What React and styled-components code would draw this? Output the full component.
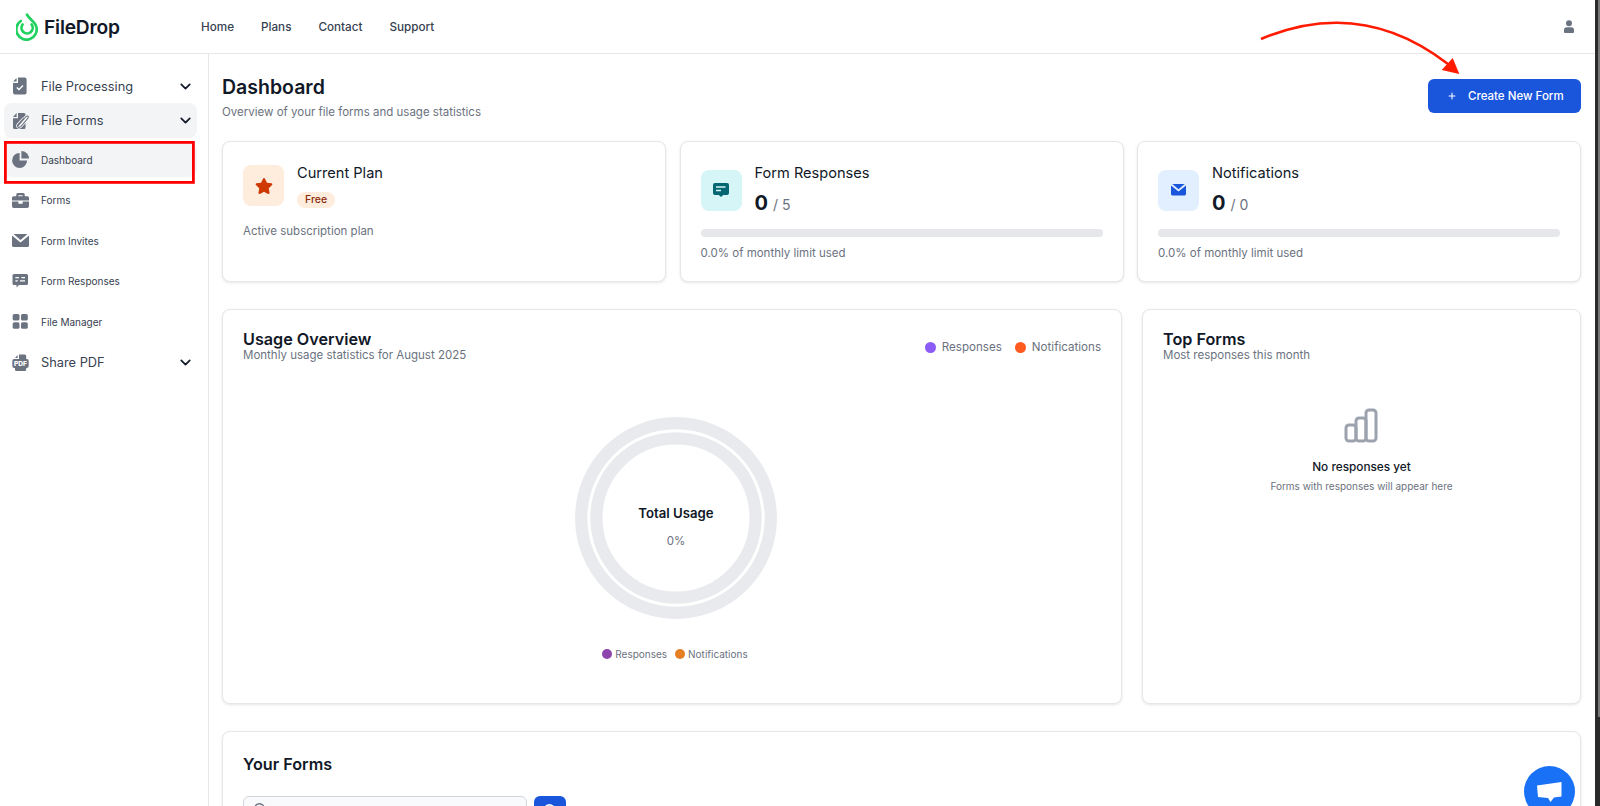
import React from 'react'
import styled, { createGlobalStyle } from 'styled-components'
import { ChevronDown, Plus, Search } from 'lucide-react'
import { FaStar, FaBriefcase } from 'react-icons/fa'

const GlobalStyle = createGlobalStyle`
  html, body { margin: 0; padding: 0; height: 100%; overflow: hidden; background: #fff; }
  body { font-family: Inter, "Liberation Sans", sans-serif; color: #111827; }
  * { box-sizing: border-box; }
`

const Page = styled.div`
  width: 1600px;
  height: 806px;
  display: flex;
  overflow: hidden;
  position: relative;
`

const Screen = styled.div`
  width: 1595px;
  height: 806px;
  display: flex;
  flex-direction: column;
  overflow: hidden;
`

const ScrollEdge = styled.div`
  width: 5px;
  background: #2a2a2a;
  display: flex;
  justify-content: flex-end;
`

const ScrollThumb = styled.div`
  width: 2px;
  height: 717px;
  background: #777;
`

const Header = styled.header`
  height: 54px;
  flex: none;
  display: flex;
  align-items: center;
  border-bottom: 1px solid #e5e7eb;
  padding: 0 21px 0 16px;
`

const Logo = styled.div`
  display: flex;
  align-items: center;
  gap: 4px;
  width: 185px;
  font-size: 19.2px;
  font-weight: 600;
  color: #111827;
  letter-spacing: -0.2px;
`

const Nav = styled.nav`
  display: flex;
  gap: 27px;
  flex: 1;
`

const NavLink = styled.a`
  font-size: 11.7px;
  font-weight: 500;
  color: #374151;
`

const Body = styled.div`
  flex: 1;
  display: flex;
  min-height: 0;
`

const Sidebar = styled.aside`
  width: 209px;
  flex: none;
  border-right: 1px solid #e5e7eb;
  padding: 15px 11px 0 4px;
  display: flex;
  flex-direction: column;
`

const GroupRow = styled.div`
  height: ${p => p.$height || 35}px;
  margin-bottom: ${p => p.$gap || 0}px;
  display: flex;
  align-items: center;
  padding: 0 3px 0 8px;
  border-radius: 8px;
  background: ${p => (p.$active ? '#f3f4f6' : 'transparent')};
  font-size: 12.8px;
  color: #374151;
`

const SubRow = styled.div`
  height: 35px;
  margin-bottom: 5.5px;
  display: flex;
  align-items: center;
  padding: 0 0 0 8px;
  border-radius: 8px;
  background: ${p => (p.$active ? '#f3f4f6' : 'transparent')};
  font-size: 10px;
  color: #374151;
`

const IconSlot = styled.span`
  width: 29px;
  flex: none;
  display: flex;
  align-items: center;
  color: #6b7280;
`

const RowLabel = styled.span`
  flex: 1;
`

const Main = styled.main`
  flex: 1;
  min-width: 0;
  padding: 21px 14px 0 13px;
  overflow: hidden;
`

const TitleBar = styled.div`
  display: flex;
  justify-content: space-between;
  align-items: flex-start;
  margin-bottom: 21px;
`

const PageTitle = styled.h1`
  margin: 0 0 5px;
  font-size: 19.5px;
  line-height: 24px;
  font-weight: 600;
  color: #111827;
`

const Muted = styled.p`
  margin: ${p => p.$top || 0}px 0 0;
  font-size: ${p => p.$size || 11.5}px;
  line-height: ${p => p.$line || 16}px;
  color: #6b7280;
`

const PrimaryButton = styled.button`
  width: 153px;
  height: 34px;
  margin-top: 4px;
  border: 0;
  border-radius: 6px;
  background: #1a56db;
  color: #fff;
  font: 500 11.5px Inter, sans-serif;
  display: flex;
  align-items: center;
  padding: 0 0 0 19px;
  gap: 11px;
`

const StatGrid = styled.div`
  display: grid;
  grid-template-columns: repeat(3, 1fr);
  gap: 13.5px;
  margin-bottom: 27px;
`

const Card = styled.section`
  background: #fff;
  border: 1px solid #e5e7eb;
  border-radius: 8px;
  box-shadow: 0 1px 3px rgba(0, 0, 0, 0.1);
`

const StatCard = styled(Card)`
  height: 141px;
  padding: 23px 20px;
`

const StatHead = styled.div`
  display: flex;
  gap: 13px;
  align-items: ${p => (p.$center ? 'center' : 'flex-start')};
`

const IconTile = styled.div`
  width: 41px;
  height: 41px;
  border-radius: 8px;
  flex: none;
  display: flex;
  align-items: center;
  justify-content: center;
  background: ${p => p.$bg};
  color: ${p => p.$fg};
`

const StatTitle = styled.div`
  font-size: 14.6px;
  line-height: 16px;
  color: #111827;
`

const Pill = styled.span`
  display: inline-block;
  margin-top: 11px;
  padding: 0 8px;
  height: 16px;
  line-height: 16px;
  border-radius: 8px;
  background: #feecdc;
  color: #8a2c0d;
  font-size: 10.5px;
  font-weight: 500;
`

const Count = styled.div`
  margin-top: 10px;
  height: 24px;
  font-size: 14px;
  color: #6b7280;
  line-height: 24px;
  b {
    font-size: 20px;
    font-weight: 700;
    color: #111827;
    margin-right: 5px;
  }
`

const Track = styled.div`
  height: 8px;
  border-radius: 4px;
  background: #e5e7eb;
  margin: 14px 0 8px;
`

const ChartGrid = styled.div`
  display: grid;
  grid-template-columns: 900px 439px;
  gap: 20px;
  margin-bottom: 27px;
`

const ChartCard = styled(Card)`
  height: 395px;
  padding: 20px;
  position: relative;
`

const CardHead = styled.div`
  display: flex;
  justify-content: space-between;
  align-items: flex-start;
`

const CardTitle = styled.h2`
  margin: 0 0 1px;
  font-size: 16.2px;
  line-height: 18px;
  font-weight: 600;
  color: #111827;
`

const Legend = styled.div`
  display: flex;
  gap: ${p => p.$gap || 13}px;
  align-items: center;
  justify-content: ${p => (p.$center ? 'center' : 'flex-start')};
  font-size: ${p => p.$size || 11.6}px;
  color: #6b7280;
  margin-top: ${p => p.$top || 0}px;
  padding-left: ${p => p.$shift || 0}px;
`

const LegendItem = styled.span`
  display: flex;
  align-items: center;
  gap: ${p => p.$gap || 6}px;
`

const Dot = styled.i`
  width: ${p => p.$size}px;
  height: ${p => p.$size}px;
  border-radius: 50%;
  background: ${p => p.$color};
  display: block;
`

const Donut = styled.div`
  width: 204px;
  height: 204px;
  margin: 54px 0 0 331px;
  position: relative;
  display: flex;
  align-items: center;
  justify-content: center;
`

const DonutLabel = styled.div`
  position: absolute;
  inset: 0;
  padding-top: 17px;
  display: flex;
  flex-direction: column;
  align-items: center;
  justify-content: center;
  gap: 14px;
`

const DonutTitle = styled.div`
  font-size: 13.2px;
  font-weight: 600;
  color: #111827;
`

const Empty = styled.div`
  display: flex;
  flex-direction: column;
  align-items: center;
  margin-top: 46px;
`

const EmptyTitle = styled.div`
  margin-top: 16px;
  font-size: 11.8px;
  font-weight: 500;
  color: #111827;
`

const FormsCard = styled(Card)`
  height: 200px;
  padding: 23px 20px;
`

const SearchRow = styled.div`
  display: flex;
  gap: 7px;
  margin-top: 23px;
`

const SearchBox = styled.div`
  width: 284px;
  height: 36px;
  border: 1px solid #d1d5db;
  border-radius: 6px;
  background: #f9fafb;
  padding: 3px 0 0 9px;
  color: #6b7280;
`

const SearchButton = styled.div`
  width: 32px;
  height: 36px;
  border-radius: 6px;
  background: #1a56db;
  color: #fff;
  padding-top: 7px;
  display: flex;
  justify-content: center;
`

const ChatBubble = styled.div`
  position: absolute;
  left: 1524px;
  top: 766px;
  width: 51px;
  height: 51px;
  border-radius: 50%;
  background: #1972f5;
  display: flex;
  align-items: center;
  justify-content: center;
`

const Annotation = styled.svg`
  position: absolute;
  left: 0;
  top: 0;
  pointer-events: none;
`

const LogoMark = () => (
  <svg width="24" height="28" viewBox="0 0 24 28" fill="none" stroke="#1fd15f" strokeWidth="2.7" strokeLinecap="round">
    <path d="M4.8 8 A10.2 10.2 0 1 0 20.4 14 C19.8 9.5 13.5 6.5 11 1.6" />
    <path d="M6.6 11.5 A5.6 5.6 0 1 0 15.6 11.5" />
  </svg>
)

// sidebar glyphs, drawn to the same 17 x 18 box
const DocCheckIcon = () => (
  <svg width="17" height="18" viewBox="0 0 17 18" fill="currentColor">
    <path d="M1 4.6 L4.6 1 V4.6 Z" />
    <path d="M6 0.5 H12.6 Q14.6 0.5 14.6 2.5 V15.5 Q14.6 17.5 12.6 17.5 H3 Q1 17.5 1 15.5 V6 H6 Z" />
    <path d="M4.8 10.4 L7 12.6 L11 8.6" fill="none" stroke="#fff" strokeWidth="1.4" />
  </svg>
)

const DocClipIcon = () => (
  <svg width="17" height="18" viewBox="0 0 17 18" fill="currentColor">
    <path d="M1 5 L4.6 1 V5 Z" />
    <path d="M6 1 H12 Q13.5 1 13.5 2.5 V15.5 Q13.5 17 12 17 H2.5 Q1 17 1 15.5 V6.2 H6 Z" />
    <path d="M6 14 L13.6 5 Q15.4 3.2 16 4.2 Q17 5.4 15 7.4 L9 14.4 Q7.4 16 6 15 Q5 14 6 12.6 L11.6 6.4" fill="none" stroke="#fff" strokeWidth="2.6" />
    <path d="M6 14 L13.6 5 Q15.4 3.2 16 4.2 Q17 5.4 15 7.4 L9 14.4 Q7.4 16 6 15 Q5 14 6 12.6 L11.6 6.4" fill="none" stroke="currentColor" strokeWidth="1.1" />
  </svg>
)

const PieIcon = () => (
  <svg width="17" height="17" viewBox="0 0 17 17" fill="currentColor">
    <path d="M7.6 9.4 V1.9 A7.5 7.5 0 1 0 15.1 9.4 Z" />
    <path d="M9.4 0 A7.6 7.6 0 0 1 17 7.6 H9.4 Z" />
  </svg>
)

const EnvelopeIcon = ({ width = 17 }) => (
  <svg width={width} height={(width * 13) / 17} viewBox="0 0 17 13" fill="currentColor">
    <path d="M1.5 0 H15.5 L8.5 6 Z" />
    <path d="M0 1.6 L8.5 8.6 L17 1.6 V11.4 Q17 13 15.4 13 H1.6 Q0 13 0 11.4 Z" />
  </svg>
)

const ChatIcon = () => (
  <svg width="17" height="14" viewBox="0 0 17 14" fill="currentColor">
    <path d="M2 0 H14.5 Q16 0 16 1.5 V9.5 Q16 11 14.5 11 H7 L4.5 13.6 V11 H2 Q0.5 11 0.5 9.5 V1.5 Q0.5 0 2 0 Z" />
    <path d="M3.4 3.6 H7 M9.4 3.6 H13 M3.4 6.8 H5.8 M8 6.8 H13" stroke="#fff" strokeWidth="1.3" fill="none" />
  </svg>
)

const GridIcon = () => (
  <svg width="17" height="15" viewBox="0 0 17 15" fill="currentColor">
    <rect x="0.7" y="0" width="6.8" height="6.6" rx="1.6" />
    <rect x="9" y="0" width="6.8" height="6.6" rx="1.6" />
    <rect x="0.7" y="8.2" width="6.8" height="6.6" rx="1.6" />
    <rect x="9" y="8.2" width="6.8" height="6.6" rx="1.6" />
  </svg>
)

const PdfIcon = () => (
  <svg width="17" height="17" viewBox="0 0 17 17" fill="currentColor">
    <path d="M3 4 L5.6 1 V4 Z" />
    <path d="M7 0.5 H12.6 Q14.2 0.5 14.2 2 V5 H3 V5 H7 Z" />
    <rect x="0.3" y="5" width="16.4" height="9" rx="2" />
    <path d="M3 13 H14.2 V15.4 Q14.2 17 12.6 17 H4.6 Q3 17 3 15.4 Z" />
    <text x="8.5" y="12.4" textAnchor="middle" fontSize="6.6" fontWeight="800" fontFamily="Inter, sans-serif" fill="#fff">PDF</text>
  </svg>
)

const BriefcaseIcon = () => <FaBriefcase size={17} />

const UserIcon = () => (
  <svg width="10" height="13" viewBox="0 0 10 13" fill="#6b7280">
    <circle cx="5" cy="3.2" r="3" />
    <path d="M0 12 V10 Q0 7.2 3 7.2 H7 Q10 7.2 10 10 V12 Q10 13 9 13 H1 Q0 13 0 12 Z" />
  </svg>
)

const MessageIcon = () => (
  <svg width="16" height="14" viewBox="0 0 16 14" fill="currentColor">
    <path d="M2 0 H14 Q16 0 16 2 V10 Q16 12 14 12 H10.2 L8 14 L5.8 12 H2 Q0 12 0 10 V2 Q0 0 2 0 Z" />
    <path d="M3 4 H12.5 M3 7.4 H8" stroke="#d5f5f6" strokeWidth="1.5" fill="none" />
  </svg>
)

const subItems = [
  { label: 'Dashboard', Icon: PieIcon, active: true },
  { label: 'Forms', Icon: BriefcaseIcon },
  { label: 'Form Invites', Icon: EnvelopeIcon },
  { label: 'Form Responses', Icon: ChatIcon },
  { label: 'File Manager', Icon: GridIcon },
]

const stats = [
  { title: 'Form Responses', limit: 5, bg: '#d5f5f6', fg: '#036672', icon: <MessageIcon /> },
  { title: 'Notifications', limit: 0, bg: '#e1effe', fg: '#1a56db', icon: <EnvelopeIcon width={15} /> },
]

const Chevron = () => <ChevronDown size={17} strokeWidth={2.4} color="#111827" />

export default function App() {
  return (
    <Page>
      <GlobalStyle />
      <Screen>
        <Header>
          <Logo>
            <LogoMark />
            FileDrop
          </Logo>
          <Nav>
            <NavLink>Home</NavLink>
            <NavLink>Plans</NavLink>
            <NavLink>Contact</NavLink>
            <NavLink>Support</NavLink>
          </Nav>
          <UserIcon />
        </Header>
        <Body>
          <Sidebar>
            <GroupRow $height={34}>
              <IconSlot><DocCheckIcon /></IconSlot>
              <RowLabel>File Processing</RowLabel>
              <Chevron />
            </GroupRow>
            <GroupRow $active $gap={4}>
              <IconSlot><DocClipIcon /></IconSlot>
              <RowLabel>File Forms</RowLabel>
              <Chevron />
            </GroupRow>
            {subItems.map(({ label, Icon, active }) => (
              <SubRow key={label} $active={active}>
                <IconSlot><Icon /></IconSlot>
                <RowLabel>{label}</RowLabel>
              </SubRow>
            ))}
            <GroupRow>
              <IconSlot><PdfIcon /></IconSlot>
              <RowLabel>Share PDF</RowLabel>
              <Chevron />
            </GroupRow>
          </Sidebar>
          <Main>
            <TitleBar>
              <div>
                <PageTitle>Dashboard</PageTitle>
                <Muted>Overview of your file forms and usage statistics</Muted>
              </div>
              <PrimaryButton><Plus size={10} strokeWidth={2.5} />Create New Form</PrimaryButton>
            </TitleBar>
            <StatGrid>
              <StatCard>
                <StatHead>
                  <IconTile $bg="#feecdc" $fg="#d03801"><FaStar size={18} /></IconTile>
                  <div>
                    <StatTitle>Current Plan</StatTitle>
                    <Pill>Free</Pill>
                  </div>
                </StatHead>
                <Muted $top={15}>Active subscription plan</Muted>
              </StatCard>
              {stats.map(({ title, limit, bg, fg, icon }) => (
                <StatCard key={title}>
                  <StatHead $center>
                    <IconTile $bg={bg} $fg={fg}>{icon}</IconTile>
                    <div>
                      <StatTitle>{title}</StatTitle>
                      <Count><b>0</b>/ {limit}</Count>
                    </div>
                  </StatHead>
                  <Track />
                  <Muted>0.0% of monthly limit used</Muted>
                </StatCard>
              ))}
            </StatGrid>
            <ChartGrid>
              <ChartCard>
                <CardHead>
                  <div>
                    <CardTitle>Usage Overview</CardTitle>
                    <Muted $line={13}>Monthly usage statistics for August 2025</Muted>
                  </div>
                  <Legend $gap={13} $top={10}>
                    <LegendItem><Dot $size={11} $color="#8b5cf6" />Responses</LegendItem>
                    <LegendItem><Dot $size={11} $color="#ff5a1f" />Notifications</LegendItem>
                  </Legend>
                </CardHead>
                <Donut>
                  <svg width="204" height="204" viewBox="0 0 204 204" fill="none" stroke="#e8eaed" strokeWidth="12.3">
                    <circle cx="102" cy="102" r="94.8" />
                    <circle cx="102" cy="102" r="79.6" />
                  </svg>
                  <DonutLabel>
                    <DonutTitle>Total Usage</DonutTitle>
                    <Muted $line={13}>0%</Muted>
                  </DonutLabel>
                </Donut>
                <Legend $center $size={10} $gap={8} $top={28} $shift={6}>
                  <LegendItem $gap={3}><Dot $size={10} $color="#8e44ad" />Responses</LegendItem>
                  <LegendItem $gap={3}><Dot $size={10} $color="#e67e22" />Notifications</LegendItem>
                </Legend>
              </ChartCard>
              <ChartCard>
                <CardTitle>Top Forms</CardTitle>
                <Muted $line={13}>Most responses this month</Muted>
                <Empty>
                  <svg width="36" height="36" viewBox="0 0 36 36" fill="none" stroke="#9ca3af" strokeWidth="3">
                    <rect x="2" y="17" width="10" height="16" rx="3" />
                    <rect x="12" y="10" width="10" height="23" rx="3" />
                    <rect x="22" y="2" width="10" height="31" rx="3" />
                  </svg>
                  <EmptyTitle>No responses yet</EmptyTitle>
                  <Muted $size={10} $line={12} $top={6}>Forms with responses will appear here</Muted>
                </Empty>
              </ChartCard>
            </ChartGrid>
            <FormsCard>
              <CardTitle>Your Forms</CardTitle>
              <SearchRow>
                <SearchBox><Search size={14} strokeWidth={2.4} /></SearchBox>
                <SearchButton><Search size={14} strokeWidth={3} /></SearchButton>
              </SearchRow>
            </FormsCard>
          </Main>
        </Body>
      </Screen>
      <ScrollEdge><ScrollThumb /></ScrollEdge>
      <ChatBubble>
        <svg width="25" height="20" viewBox="0 0 25 20" fill="#fff">
          <path d="M0 3.5 L24.5 0 V14.5 L17 15.5 L13.5 20 L11 16 L1 15 Z" />
        </svg>
      </ChatBubble>
      <Annotation width="1600" height="806" viewBox="0 0 1600 806" fill="none">
        <rect x="5.4" y="142.4" width="188" height="40" stroke="#ff0000" strokeWidth="2.8" />
        <path d="M1261 39 Q1300 22.5 1337 22.7 Q1395 23 1448 64" stroke="#ff1a00" strokeWidth="2.6" />
        <path d="M1441.7 70 L1452.7 58 L1459.3 74 Z" fill="#ff1a00" />
      </Annotation>
    </Page>
  )
}
